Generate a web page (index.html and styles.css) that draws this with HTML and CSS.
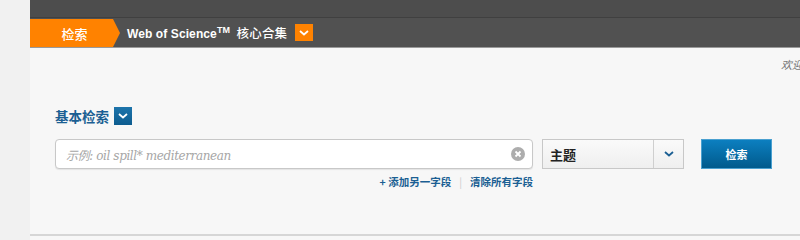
FILE: index.html
```html
<!DOCTYPE html>
<html lang="zh">
<head>
<meta charset="utf-8">
<link rel="stylesheet" href="styles.css">
</head>
<body>
<div class="page">
  <div class="side"></div>
  <div class="main">
    <div class="topbar"></div>
    <div class="navbar">
      <div class="tab">检索</div>
      <div class="product">Web of Science<sup>TM</sup> <span class="cn">核心合集</span></div>
      <div class="obox"><svg width="10" height="6" viewBox="0 0 10 6"><path d="M1 1 L5 4.5 L9 1" fill="none" stroke="#fff" stroke-width="1.8"/></svg></div>
    </div>
    <div class="content">
      <div class="welcome">欢迎</div>
      <div class="title-row">
        <span class="title">基本检索</span>
        <span class="bbox"><svg width="10" height="6" viewBox="0 0 10 6"><path d="M1 1 L5 4.5 L9 1" fill="none" stroke="#fff" stroke-width="1.8"/></svg></span>
      </div>
      <div class="search-row">
        <div class="input">
          <span class="ph">示例: oil spill* mediterranean</span>
          <span class="clear"><svg width="8" height="8" viewBox="0 0 8 8"><path d="M1.5 1.5 L6.5 6.5 M6.5 1.5 L1.5 6.5" stroke="#fff" stroke-width="1.8"/></svg></span>
        </div>
        <div class="select">
          <span class="sel-text">主题</span>
          <span class="sel-btn"><svg width="10" height="6" viewBox="0 0 10 6"><path d="M1 1 L5 4.5 L9 1" fill="none" stroke="#1b5f93" stroke-width="1.8"/></svg></span>
        </div>
        <div class="btn">检索</div>
      </div>
      <div class="links">
        <span class="link">+ 添加另一字段</span>
        <span class="sep">|</span>
        <span class="link">清除所有字段</span>
      </div>
    </div>
    <div class="bottom"></div>
  </div>
</div>
</body>
</html>
```
FILE: styles.css
```css
html, body { margin: 0; padding: 0; }
body { width: 800px; height: 240px; overflow: hidden; background: #f1f1f1; font-family: "Liberation Sans", "Noto Sans CJK SC", sans-serif; }
.page { display: flex; height: 240px; }
.side { width: 30px; flex: none; background: #f1f1f1; }
.main { flex: 1; display: flex; flex-direction: column; background: #f7f7f7; min-width: 0; }
.topbar { height: 17px; background: #4d4d4d; border-bottom: 1px solid #404040; }
.navbar { height: 29px; background: #515151; border-bottom: 1px solid #9a9a9a; display: flex; align-items: center; }
.tab { position: relative; width: 83px; height: 28px; margin-top: 1px; background: #ff8200; color: #fff; font-size: 13px; font-weight: 500; font-family: "Noto Sans CJK SC", sans-serif; display: flex; align-items: center; justify-content: center; padding-left: 6px; box-sizing: border-box; }
.tab::after { content: ""; position: absolute; right: -7px; top: 0; border-left: 7px solid #ff8200; border-top: 14px solid transparent; border-bottom: 14px solid transparent; }
.product { margin-left: 14px; color: #fff; font-weight: bold; font-size: 12px; font-family: "Liberation Sans", "Noto Sans CJK SC", sans-serif; letter-spacing: 0.1px; white-space: nowrap; }
.product sup { font-size: 9px; vertical-align: 5px; line-height: 0; margin-right: 3px; }
.product .cn { font-family: "Noto Sans CJK SC", sans-serif; font-weight: 500; font-size: 12.5px; letter-spacing: 0.2px; }
.obox { width: 18px; height: 17px; margin-left: 8px; background: #ff8200; display: flex; align-items: center; justify-content: center; }
.content { flex: 1; position: relative; padding-left: 25px; overflow: hidden; }
.welcome { position: absolute; left: 751px; top: 8px; font-size: 11px; font-style: italic; color: #777; white-space: nowrap; font-family: "Noto Sans CJK SC", sans-serif; }
.title-row { display: flex; align-items: center; margin-top: 58px; height: 20px; }
.title { color: #1b5f93; font-size: 13.5px; font-family: "Noto Sans CJK SC", sans-serif; font-weight: bold; }
.bbox { width: 18px; height: 18px; margin-left: 5px; background: linear-gradient(#1d74ab, #0d5c8f); display: flex; align-items: center; justify-content: center; }
.search-row { display: flex; margin-top: 13px; height: 30px; }
.input { width: 478px; height: 30px; box-sizing: border-box; background: #fff; border: 1px solid #c8c8c8; border-radius: 4px; box-shadow: 0 1px 1px rgba(0,0,0,0.08); display: flex; align-items: center; padding-left: 10px; padding-right: 7px; }
.ph { flex: 1; color: #a6a6a6; font-style: italic; font-size: 12px; font-family: "DejaVu Serif", "Noto Sans CJK SC", serif; letter-spacing: -0.4px; }
.clear { width: 14px; height: 14px; border-radius: 50%; background: #adadad; display: flex; align-items: center; justify-content: center; }
.select { width: 142px; height: 30px; box-sizing: border-box; margin-left: 9px; border: 1px solid #c8c8c8; background: linear-gradient(#fafafa, #efefef); display: flex; align-items: center; }
.sel-text { flex: 1; padding-left: 7px; font-size: 13px; font-family: "Noto Sans CJK SC", sans-serif; color: #222; font-weight: bold; }
.sel-btn { width: 29px; height: 28px; border-left: 1px solid #cfcfcf; display: flex; align-items: center; justify-content: center; }
.btn { width: 71px; height: 30px; box-sizing: border-box; margin-left: 17px; background: linear-gradient(#0c7fc0, #005a8c); border: 1px solid #4aa0d0; color: #fff; font-size: 11px; font-weight: bold; font-family: "Noto Sans CJK SC", sans-serif; display: flex; align-items: center; justify-content: center; }
.links { display: flex; align-items: center; justify-content: flex-end; width: 478px; margin-top: 4px; font-size: 10.5px; font-family: "Noto Sans CJK SC", sans-serif; font-weight: bold; color: #1b5f93; height: 16px; white-space: nowrap; }
.sep { color: #ccc; font-weight: normal; margin: 0 8px; }
.bottom { height: 4px; border-top: 2px solid #d6d6d6; background: #f7f7f7; }
```
